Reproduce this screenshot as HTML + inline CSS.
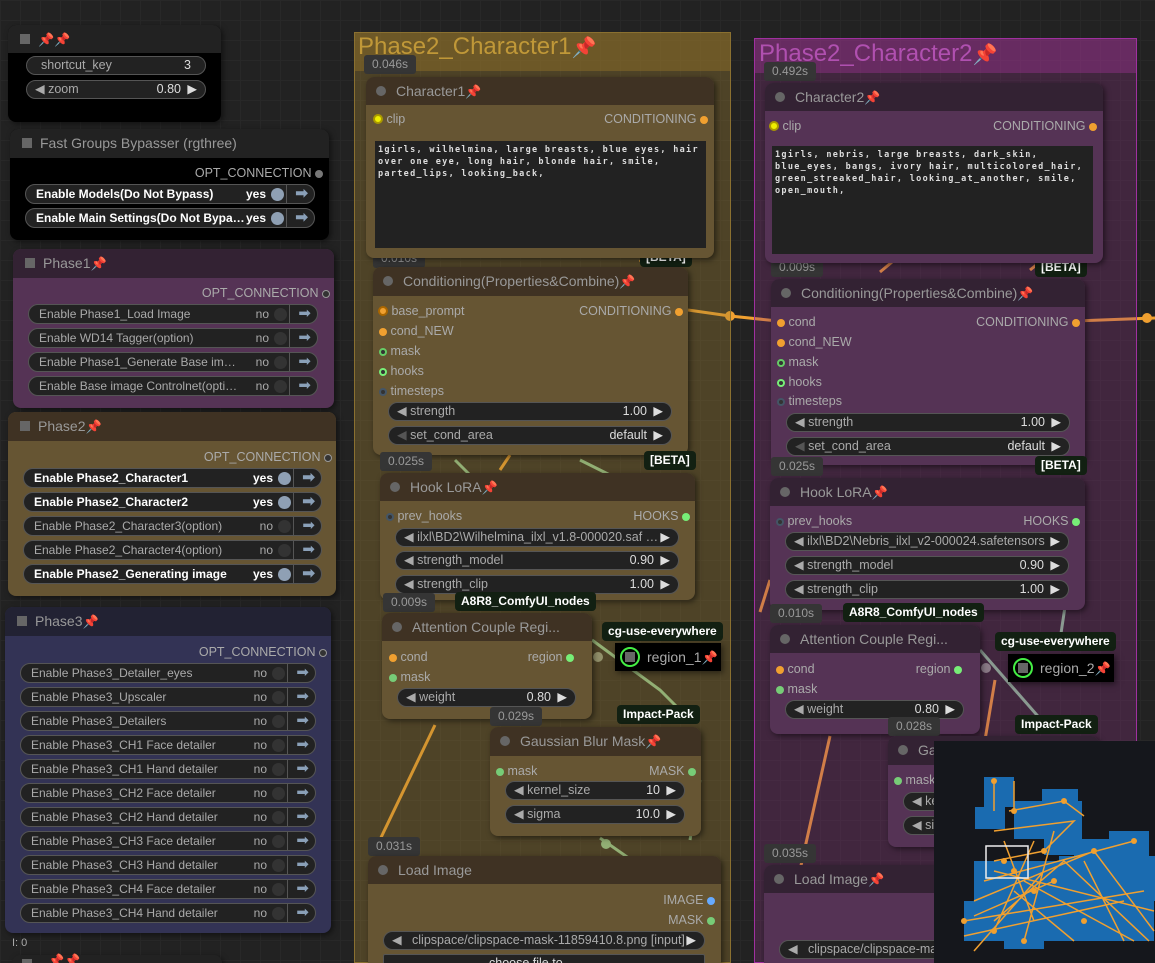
<!DOCTYPE html>
<html style="width:1155px;height:963px;overflow:hidden"><head><meta charset="utf-8">
<style>
*{box-sizing:border-box;margin:0;padding:0}
body{width:1155px;height:963px;overflow:hidden;position:relative;background:#222;font-family:"Liberation Sans",sans-serif;font-size:12px;color:#aaa;
background-image:linear-gradient(#282828 1px,transparent 1px),linear-gradient(90deg,#282828 1px,transparent 1px);background-size:20px 20px}
.a{position:absolute}
.node{position:absolute;border-radius:8px;overflow:visible;box-shadow:2px 2px 6px rgba(0,0,0,.5)}
.ttl{position:absolute;left:0;right:0;top:0;border-radius:8px 8px 0 0;font-size:14px;color:#999;padding-left:30px;line-height:28px;white-space:nowrap;overflow:hidden}
.ttl .dot{position:absolute;left:10px;top:9px;width:10px;height:10px;border-radius:50%;background:#666}
.ttl .sq{position:absolute;left:12px;top:9px;width:10px;height:10px;background:#666}
.pin{color:#e0305a;font-size:13px}
.w{position:absolute;height:19px;border-radius:10px;background:#222;border:1px solid #555;color:#aaa;font-size:12.5px;line-height:17px;white-space:nowrap}
.w .l{position:absolute;left:8px}
.w .v{position:absolute;right:24px;color:#ddd}
.w .r{position:absolute;right:8px;color:#ddd}
.t{position:absolute;height:20px;border-radius:10px;background:#222;border:1px solid #555;color:#aaa;font-size:12px;line-height:18px;white-space:nowrap}
.t .l{position:absolute;left:10px}
.t .v{position:absolute;right:48px}
.t .c{position:absolute;right:30px;top:3px;width:13px;height:13px;border-radius:50%;background:#333}
.t .d{position:absolute;right:27px;top:0;bottom:0;width:1px;background:#555}
.t .ar{position:absolute;right:6px;top:0;color:#8aa0b8;font-size:15px}
.t.b{color:#fff;font-weight:bold}
.t.b .c{background:#8fa0b4}
.slot{position:absolute;font-size:12.5px;color:#aaa;white-space:nowrap}
.sd{display:inline-block;width:8px;height:8px;border-radius:50%;vertical-align:-1px}
.badge{position:absolute;height:19px;background:#353535;color:#999;font-size:12px;line-height:19px;padding:0 8px;border-radius:3px}
.gb{position:absolute;height:19px;background:#122012;color:#fff;font-size:12px;font-weight:bold;line-height:19px;padding:0 6px;border-radius:4px}
.ta{position:absolute;background:#222;color:#ddd;font-family:"DejaVu Sans Mono",monospace;font-size:8.5px;line-height:12px;padding:3px 3px;letter-spacing:1.3px;font-weight:bold}
</style></head><body>

<svg class="a" style="left:0;top:0" width="1155" height="963">
<g stroke="#f0a030" stroke-width="3" fill="none">
<path d="M688 310 L730 316 L778 321"/><path d="M1075 321 L1155 318"/>
<path d="M400 258 L430 250"/><path d="M640 262 L650 250"/>
<path d="M500 470 L510 455"/><path d="M435 725 L375 850"/>
<path d="M830 736 L800 870"/><path d="M892 262 L880 272"/>
<path d="M1030 270 L1040 262"/>
<path d="M760 612 L770 580"/><path d="M995 680 L985 740"/>
</g>
<g stroke="#8ac898" stroke-width="3" fill="none">
<path d="M455 460 L470 475"/><path d="M580 460 L620 480"/>
<path d="M592 640 L660 690 L690 720"/><path d="M600 838 L660 880"/>
<path d="M690 840 L700 780"/><path d="M980 650 L1050 730"/>
<path d="M1078 520 L1060 640"/>
</g>
<circle cx="730" cy="316" r="5" fill="#f0a030"/><circle cx="1147" cy="318" r="5" fill="#f0a030"/>
<circle cx="598" cy="657" r="5" fill="#8a9a8a"/><circle cx="986" cy="668" r="5" fill="#8a9a8a"/>
<circle cx="606" cy="844" r="5" fill="#8ac898"/>
</svg>

<div class="a" style="left:354px;top:32px;width:377px;height:931px;background:rgba(160,130,50,.35);border:1px solid #8a7030"></div>
<div class="a" style="left:355px;top:33px;width:375px;height:38px;background:rgba(140,110,40,.5)"></div>
<div class="a" style="left:358px;top:31px;font-size:24px;color:#c09838;line-height:32px">Phase2_Character1<span class="pin" style="font-size:20px">📌</span></div>
<div class="a" style="left:754px;top:38px;width:383px;height:925px;background:rgba(140,50,130,.3);border:1px solid #a030a0"></div>
<div class="a" style="left:755px;top:39px;width:381px;height:34px;background:rgba(150,50,140,.45)"></div>
<div class="a" style="left:759px;top:38px;font-size:24px;color:#b050b0;line-height:32px">Phase2_Character2<span class="pin" style="font-size:20px">📌</span></div>

<div class="node" style="left:8px;top:25px;width:213px;height:97px;background:#000">
 <div class="ttl" style="height:28px;background:#222"><span class="sq"></span><span class="pin">📌📌</span></div>
 <div class="w" style="left:18px;top:31px;width:180px"><span class="l" style="left:14px">shortcut_key</span><span class="r" style="right:14px">3</span></div>
 <div class="w" style="left:18px;top:55px;width:180px"><span class="l">◀ zoom</span><span class="v">0.80</span><span class="r">▶</span></div>
</div>

<div class="node" style="left:10px;top:129px;width:319px;height:111px;background:#000">
 <div class="ttl" style="height:29px;background:#222;font-size:14px"><span class="sq"></span>Fast Groups Bypasser (rgthree)</div>
 <div class="slot" style="right:6px;top:37px">OPT_CONNECTION <span class="sd" style="background:#777"></span></div>
 <div class="t b" style="left:15px;top:55px;width:290px"><span class="l">Enable Models(Do Not Bypass)</span><span class="v">yes</span><span class="c"></span><span class="d"></span><span class="ar">➡</span></div>
 <div class="t b" style="left:15px;top:79px;width:290px"><span class="l">Enable Main Settings(Do Not Bypa…</span><span class="v">yes</span><span class="c"></span><span class="d"></span><span class="ar">➡</span></div>
</div>

<div class="node" style="left:13px;top:249px;width:321px;height:159px;background:#553355">
 <div class="ttl" style="height:29px;background:#332233"><span class="sq"></span>Phase1<span class="pin">📌</span></div>
 <div class="slot" style="right:4px;top:37px">OPT_CONNECTION <span class="sd" style="background:#333;border:1px solid #999"></span></div>
 <div class="t" style="left:15px;top:55px;width:290px"><span class="l">Enable Phase1_Load Image</span><span class="v">no</span><span class="c"></span><span class="d"></span><span class="ar">➡</span></div>
 <div class="t" style="left:15px;top:79px;width:290px"><span class="l">Enable WD14 Tagger(option)</span><span class="v">no</span><span class="c"></span><span class="d"></span><span class="ar">➡</span></div>
 <div class="t" style="left:15px;top:103px;width:290px"><span class="l">Enable Phase1_Generate Base im…</span><span class="v">no</span><span class="c"></span><span class="d"></span><span class="ar">➡</span></div>
 <div class="t" style="left:15px;top:127px;width:290px"><span class="l">Enable Base image Controlnet(opti…</span><span class="v">no</span><span class="c"></span><span class="d"></span><span class="ar">➡</span></div>
</div>

<div class="node" style="left:8px;top:412px;width:328px;height:184px;background:#665533">
 <div class="ttl" style="height:29px;background:#3f3223"><span class="sq"></span>Phase2<span class="pin">📌</span></div>
 <div class="slot" style="right:4px;top:38px">OPT_CONNECTION <span class="sd" style="background:#333;border:1px solid #999"></span></div>
 <div class="t b" style="left:15px;top:56px;width:299px"><span class="l">Enable Phase2_Character1</span><span class="v">yes</span><span class="c"></span><span class="d"></span><span class="ar">➡</span></div>
 <div class="t b" style="left:15px;top:80px;width:299px"><span class="l">Enable Phase2_Character2</span><span class="v">yes</span><span class="c"></span><span class="d"></span><span class="ar">➡</span></div>
 <div class="t" style="left:15px;top:104px;width:299px"><span class="l">Enable Phase2_Character3(option)</span><span class="v">no</span><span class="c"></span><span class="d"></span><span class="ar">➡</span></div>
 <div class="t" style="left:15px;top:128px;width:299px"><span class="l">Enable Phase2_Character4(option)</span><span class="v">no</span><span class="c"></span><span class="d"></span><span class="ar">➡</span></div>
 <div class="t b" style="left:15px;top:152px;width:299px"><span class="l">Enable Phase2_Generating image</span><span class="v">yes</span><span class="c"></span><span class="d"></span><span class="ar">➡</span></div>
</div>

<div class="node" style="left:5px;top:607px;width:326px;height:326px;background:#333355">
 <div class="ttl" style="height:29px;background:#222233"><span class="sq"></span>Phase3<span class="pin">📌</span></div>
 <div class="slot" style="right:4px;top:38px">OPT_CONNECTION <span class="sd" style="background:#333;border:1px solid #999"></span></div>
 <div class="t" style="left:15px;top:56px;width:296px"><span class="l">Enable Phase3_Detailer_eyes</span><span class="v">no</span><span class="c"></span><span class="d"></span><span class="ar">➡</span></div>
 <div class="t" style="left:15px;top:80px;width:296px"><span class="l">Enable Phase3_Upscaler</span><span class="v">no</span><span class="c"></span><span class="d"></span><span class="ar">➡</span></div>
 <div class="t" style="left:15px;top:104px;width:296px"><span class="l">Enable Phase3_Detailers</span><span class="v">no</span><span class="c"></span><span class="d"></span><span class="ar">➡</span></div>
 <div class="t" style="left:15px;top:128px;width:296px"><span class="l">Enable Phase3_CH1 Face detailer</span><span class="v">no</span><span class="c"></span><span class="d"></span><span class="ar">➡</span></div>
 <div class="t" style="left:15px;top:152px;width:296px"><span class="l">Enable Phase3_CH1 Hand detailer</span><span class="v">no</span><span class="c"></span><span class="d"></span><span class="ar">➡</span></div>
 <div class="t" style="left:15px;top:176px;width:296px"><span class="l">Enable Phase3_CH2 Face detailer</span><span class="v">no</span><span class="c"></span><span class="d"></span><span class="ar">➡</span></div>
 <div class="t" style="left:15px;top:200px;width:296px"><span class="l">Enable Phase3_CH2 Hand detailer</span><span class="v">no</span><span class="c"></span><span class="d"></span><span class="ar">➡</span></div>
 <div class="t" style="left:15px;top:224px;width:296px"><span class="l">Enable Phase3_CH3 Face detailer</span><span class="v">no</span><span class="c"></span><span class="d"></span><span class="ar">➡</span></div>
 <div class="t" style="left:15px;top:248px;width:296px"><span class="l">Enable Phase3_CH3 Hand detailer</span><span class="v">no</span><span class="c"></span><span class="d"></span><span class="ar">➡</span></div>
 <div class="t" style="left:15px;top:272px;width:296px"><span class="l">Enable Phase3_CH4 Face detailer</span><span class="v">no</span><span class="c"></span><span class="d"></span><span class="ar">➡</span></div>
 <div class="t" style="left:15px;top:296px;width:296px"><span class="l">Enable Phase3_CH4 Hand detailer</span><span class="v">no</span><span class="c"></span><span class="d"></span><span class="ar">➡</span></div>
</div>
<div class="a" style="left:12px;top:937px;font-size:11px;color:#aaa">I: 0</div>
<div class="node" style="left:12px;top:955px;width:210px;height:20px;background:#222"><span class="a" style="left:10px;top:4px;width:10px;height:10px;background:#666"></span><span class="a pin" style="left:36px;top:-2px">📌📌</span></div>

<div class="badge" style="left:364px;top:55px">0.046s</div>
<div class="badge" style="left:373px;top:249px">0.010s</div>
<div class="gb" style="left:640px;top:248px">[BETA]</div>
<div class="node" style="left:366px;top:77px;width:348px;height:181px;background:#665533">
 <div class="ttl" style="height:28px;background:#3f3223"><span class="dot"></span>Character1<span class="pin">📌</span></div>
 <div class="slot" style="left:7px;top:35px"><span class="sd" style="background:#ee0;border:2px solid #a90;width:10px;height:10px"></span> clip</div>
 <div class="slot" style="right:6px;top:35px">CONDITIONING <span class="sd" style="background:#f0a030"></span></div>
 <div class="ta" style="left:9px;top:64px;width:331px;height:107px">1girls, wilhelmina, large breasts, blue eyes, hair over one eye, long hair, blonde hair, smile, parted_lips, looking_back,</div>
</div>

<div class="node" style="left:373px;top:267px;width:315px;height:188px;background:#665533">
 <div class="ttl" style="height:29px;background:#3f3223"><span class="dot"></span>Conditioning(Properties&amp;Combine)<span class="pin">📌</span></div>
 <div class="slot" style="left:5px;top:37px"><span class="sd" style="background:#f0a030;border:2px solid #a60;width:10px;height:10px"></span> base_prompt</div>
 <div class="slot" style="right:5px;top:37px">CONDITIONING <span class="sd" style="background:#f0a030"></span></div>
 <div class="slot" style="left:6px;top:57px"><span class="sd" style="background:#f0a030"></span> cond_NEW</div>
 <div class="slot" style="left:6px;top:77px"><span class="sd" style="background:#333;border:2px solid #6c6"></span> mask</div>
 <div class="slot" style="left:6px;top:97px"><span class="sd" style="background:#333;border:2px solid #7e7"></span> hooks</div>
 <div class="slot" style="left:6px;top:117px"><span class="sd" style="background:#333;border:2px solid #456"></span> timesteps</div>
 <div class="w" style="left:15px;top:135px;width:284px"><span class="l">◀ strength</span><span class="v">1.00</span><span class="r">▶</span></div>
 <div class="w" style="left:15px;top:159px;width:284px"><span class="l"><span style="color:#555">◀</span> set_cond_area</span><span class="v">default</span><span class="r">▶</span></div>
</div>
<div class="badge" style="left:380px;top:452px">0.025s</div>
<div class="gb" style="left:644px;top:451px">[BETA]</div>

<div class="node" style="left:380px;top:473px;width:315px;height:127px;background:#665533">
 <div class="ttl" style="height:28px;background:#3f3223"><span class="dot"></span>Hook LoRA<span class="pin">📌</span></div>
 <div class="slot" style="left:6px;top:36px"><span class="sd" style="background:#333;border:2px solid #456"></span> prev_hooks</div>
 <div class="slot" style="right:5px;top:36px">HOOKS <span class="sd" style="background:#7e7"></span></div>
 <div class="w" style="left:15px;top:55px;width:284px"><span class="l">◀ ilxl\BD2\Wilhelmina_ilxl_v1.8-000020.saf …</span><span class="r">▶</span></div>
 <div class="w" style="left:15px;top:78px;width:284px"><span class="l">◀ strength_model</span><span class="v">0.90</span><span class="r">▶</span></div>
 <div class="w" style="left:15px;top:102px;width:284px"><span class="l">◀ strength_clip</span><span class="v">1.00</span><span class="r">▶</span></div>
</div>
<div class="badge" style="left:383px;top:593px">0.009s</div>
<div class="gb" style="left:455px;top:592px">A8R8_ComfyUI_nodes</div>

<div class="node" style="left:382px;top:613px;width:210px;height:106px;background:#665533">
 <div class="ttl" style="height:28px;background:#3f3223"><span class="dot"></span>Attention Couple Regi...</div>
 <div class="slot" style="left:7px;top:37px"><span class="sd" style="background:#f0a030"></span> cond</div>
 <div class="slot" style="right:18px;top:37px">region <span class="sd" style="background:#7e7"></span></div>
 <div class="slot" style="left:7px;top:57px"><span class="sd" style="background:#7c7"></span> mask</div>
 <div class="w" style="left:15px;top:75px;width:179px"><span class="l">◀ weight</span><span class="v">0.80</span><span class="r">▶</span></div>
</div>
<div class="gb" style="left:602px;top:622px">cg-use-everywhere</div>
<div class="node" style="left:615px;top:643px;width:106px;height:28px;background:#000;border-radius:0;color:#aaa;font-size:14px;line-height:28px;padding-left:32px">region_1<span class="pin">📌</span><span class="a" style="left:5px;top:4px;width:20px;height:20px;border:2px solid #4e4;border-radius:50%"></span><span class="a" style="left:10px;top:9px;width:10px;height:10px;background:#666"></span></div>

<div class="badge" style="left:490px;top:707px">0.029s</div>
<div class="gb" style="left:617px;top:705px">Impact-Pack</div>
<div class="node" style="left:490px;top:727px;width:211px;height:109px;background:#665533">
 <div class="ttl" style="height:29px;background:#3f3223"><span class="dot"></span>Gaussian Blur Mask<span class="pin">📌</span></div>
 <div class="slot" style="left:6px;top:37px"><span class="sd" style="background:#7c7"></span> mask</div>
 <div class="slot" style="right:5px;top:37px">MASK <span class="sd" style="background:#7c7"></span></div>
 <div class="w" style="left:15px;top:54px;width:180px"><span class="l">◀ kernel_size</span><span class="v">10</span><span class="r">▶</span></div>
 <div class="w" style="left:15px;top:78px;width:180px"><span class="l">◀ sigma</span><span class="v">10.0</span><span class="r">▶</span></div>
</div>

<div class="badge" style="left:368px;top:837px">0.031s</div>
<div class="node" style="left:368px;top:856px;width:353px;height:120px;background:#665533">
 <div class="ttl" style="height:28px;background:#3f3223"><span class="dot"></span>Load Image</div>
 <div class="slot" style="right:6px;top:37px">IMAGE <span class="sd" style="background:#6af"></span></div>
 <div class="slot" style="right:6px;top:57px">MASK <span class="sd" style="background:#7c7"></span></div>
 <div class="w" style="left:15px;top:75px;width:322px"><span class="l">◀ &nbsp; clipspace/clipspace-mask-11859410.8.png [input]</span><span class="r">▶</span></div>
 <div class="w" style="left:15px;top:98px;width:322px;border-radius:2px"><span class="l" style="left:105px;color:#ddd">choose file to</span></div>
</div>

<div class="badge" style="left:764px;top:62px">0.492s</div>
<div class="badge" style="left:771px;top:258px">0.009s</div>
<div class="gb" style="left:1035px;top:258px">[BETA]</div>
<div class="node" style="left:765px;top:83px;width:338px;height:180px;background:#553355">
 <div class="ttl" style="height:28px;background:#332233"><span class="dot"></span>Character2<span class="pin">📌</span></div>
 <div class="slot" style="left:4px;top:36px"><span class="sd" style="background:#ee0;border:2px solid #a90;width:10px;height:10px"></span> clip</div>
 <div class="slot" style="right:6px;top:36px">CONDITIONING <span class="sd" style="background:#f0a030"></span></div>
 <div class="ta" style="left:7px;top:63px;width:321px;height:108px">1girls, nebris, large breasts, dark_skin, blue_eyes, bangs, ivory hair, multicolored_hair, green_streaked_hair, looking_at_another, smile, open_mouth,</div>
</div>

<div class="node" style="left:771px;top:279px;width:314px;height:186px;background:#553355">
 <div class="ttl" style="height:28px;background:#332233"><span class="dot"></span>Conditioning(Properties&amp;Combine)<span class="pin">📌</span></div>
 <div class="slot" style="left:6px;top:36px"><span class="sd" style="background:#f0a030"></span> cond</div>
 <div class="slot" style="right:5px;top:36px">CONDITIONING <span class="sd" style="background:#f0a030"></span></div>
 <div class="slot" style="left:6px;top:56px"><span class="sd" style="background:#f0a030"></span> cond_NEW</div>
 <div class="slot" style="left:6px;top:76px"><span class="sd" style="background:#333;border:2px solid #6c6"></span> mask</div>
 <div class="slot" style="left:6px;top:96px"><span class="sd" style="background:#333;border:2px solid #7e7"></span> hooks</div>
 <div class="slot" style="left:6px;top:115px"><span class="sd" style="background:#333;border:2px solid #456"></span> timesteps</div>
 <div class="w" style="left:15px;top:134px;width:284px"><span class="l">◀ strength</span><span class="v">1.00</span><span class="r">▶</span></div>
 <div class="w" style="left:15px;top:158px;width:284px"><span class="l"><span style="color:#555">◀</span> set_cond_area</span><span class="v">default</span><span class="r">▶</span></div>
</div>
<div class="badge" style="left:771px;top:457px">0.025s</div>
<div class="gb" style="left:1035px;top:456px">[BETA]</div>

<div class="node" style="left:770px;top:478px;width:315px;height:132px;background:#553355">
 <div class="ttl" style="height:28px;background:#332233"><span class="dot"></span>Hook LoRA<span class="pin">📌</span></div>
 <div class="slot" style="left:6px;top:36px"><span class="sd" style="background:#333;border:2px solid #456"></span> prev_hooks</div>
 <div class="slot" style="right:5px;top:36px">HOOKS <span class="sd" style="background:#7e7"></span></div>
 <div class="w" style="left:15px;top:54px;width:284px"><span class="l">◀ ilxl\BD2\Nebris_ilxl_v2-000024.safetensors</span><span class="r">▶</span></div>
 <div class="w" style="left:15px;top:78px;width:284px"><span class="l">◀ strength_model</span><span class="v">0.90</span><span class="r">▶</span></div>
 <div class="w" style="left:15px;top:102px;width:284px"><span class="l">◀ strength_clip</span><span class="v">1.00</span><span class="r">▶</span></div>
</div>
<div class="badge" style="left:770px;top:604px">0.010s</div>
<div class="gb" style="left:843px;top:603px">A8R8_ComfyUI_nodes</div>

<div class="node" style="left:770px;top:625px;width:210px;height:109px;background:#553355">
 <div class="ttl" style="height:28px;background:#332233"><span class="dot"></span>Attention Couple Regi...</div>
 <div class="slot" style="left:6px;top:37px"><span class="sd" style="background:#f0a030"></span> cond</div>
 <div class="slot" style="right:18px;top:37px">region <span class="sd" style="background:#7e7"></span></div>
 <div class="slot" style="left:6px;top:57px"><span class="sd" style="background:#7c7"></span> mask</div>
 <div class="w" style="left:15px;top:75px;width:179px"><span class="l">◀ weight</span><span class="v">0.80</span><span class="r">▶</span></div>
</div>
<div class="gb" style="left:995px;top:632px">cg-use-everywhere</div>
<div class="node" style="left:1008px;top:654px;width:106px;height:28px;background:#000;border-radius:0;color:#aaa;font-size:14px;line-height:28px;padding-left:32px">region_2<span class="pin">📌</span><span class="a" style="left:5px;top:4px;width:20px;height:20px;border:2px solid #4e4;border-radius:50%"></span><span class="a" style="left:10px;top:9px;width:10px;height:10px;background:#666"></span></div>

<div class="badge" style="left:888px;top:717px">0.028s</div>
<div class="gb" style="left:1015px;top:715px">Impact-Pack</div>
<div class="node" style="left:888px;top:736px;width:211px;height:111px;background:#553355">
 <div class="ttl" style="height:29px;background:#332233"><span class="dot"></span>Gaussian Blur Mask</div>
 <div class="slot" style="left:6px;top:37px"><span class="sd" style="background:#7c7"></span> mask</div>
 <div class="w" style="left:15px;top:56px;width:180px"><span class="l">◀ kernel_size</span></div>
 <div class="w" style="left:15px;top:80px;width:180px"><span class="l">◀ sigma</span></div>
</div>

<div class="badge" style="left:764px;top:844px">0.035s</div>
<div class="node" style="left:764px;top:865px;width:360px;height:120px;background:#553355">
 <div class="ttl" style="height:28px;background:#332233"><span class="dot"></span>Load Image<span class="pin">📌</span></div>
 <div class="w" style="left:15px;top:75px;width:322px"><span class="l">◀ &nbsp; clipspace/clipspace-mask-11859410.8.png [input]</span></div>
</div>

<svg class="a" style="left:934px;top:741px" width="221" height="222">
<rect width="221" height="222" fill="#15171c"/>
<g fill="#1a6bb0">
<rect x="50" y="36" width="30" height="30"/><rect x="108" y="48" width="36" height="30"/>
<rect x="41" y="66" width="30" height="22"/><rect x="80" y="60" width="68" height="38"/>
<rect x="110" y="84" width="30" height="30"/><rect x="140" y="98" width="40" height="30"/>
<rect x="175" y="90" width="40" height="40"/><rect x="125" y="115" width="96" height="45"/>
<rect x="40" y="120" width="90" height="50"/><rect x="30" y="160" width="190" height="40"/>
<rect x="70" y="190" width="40" height="18"/>
</g>
<g stroke="#f0a030" stroke-width="1.5" fill="none">
<path d="M60 40 L60 70 M80 40 L80 70 M75 70 L130 60 L150 75 M60 90 L140 80 L110 110 L60 120 M50 140 L200 100 M30 180 L210 150 M60 180 L130 120 L215 200 M30 195 L190 160 M110 130 L40 210 M90 140 L200 200 M40 160 L160 110 L220 190 M70 100 L100 180 M120 90 L90 200 M60 130 L220 170 M80 150 L140 200 M100 100 L60 190 M150 120 L190 200 M40 175 L120 140"/>
</g>
<g fill="#f0a030"><circle cx="60" cy="40" r="3"/><circle cx="80" cy="70" r="3"/><circle cx="130" cy="60" r="3"/><circle cx="70" cy="120" r="3"/><circle cx="110" cy="110" r="3"/><circle cx="160" cy="110" r="3"/><circle cx="30" cy="180" r="3"/><circle cx="200" cy="100" r="3"/><circle cx="100" cy="150" r="3"/><circle cx="150" cy="180" r="3"/><circle cx="80" cy="130" r="3"/><circle cx="90" cy="200" r="3"/><circle cx="60" cy="190" r="3"/><circle cx="120" cy="140" r="3"/></g>
<rect x="52" y="105" width="42" height="32" fill="none" stroke="#eee" stroke-width="1.5"/>
</svg>

</body></html>
